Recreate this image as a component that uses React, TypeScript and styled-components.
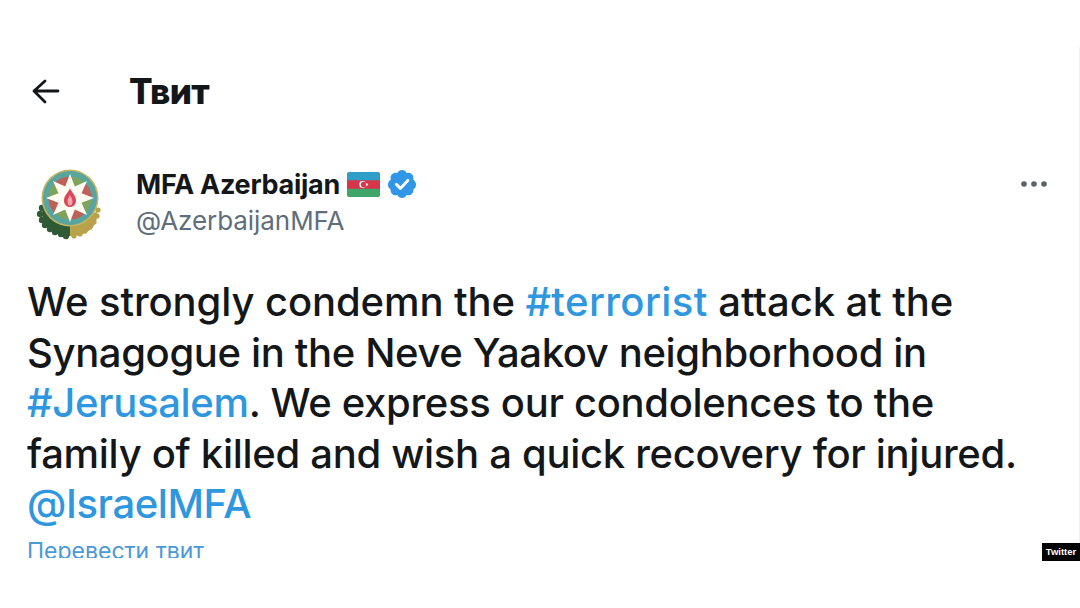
import React from "react";
import styled, { createGlobalStyle } from "styled-components";

const Global = createGlobalStyle`
  html, body { margin: 0; padding: 0; background: #fff; }
  body { font-family: Inter, "Liberation Sans", sans-serif; }
`;
const Page = styled.div`
  position: relative;
  width: 1080px;
  height: 608px;
  overflow: hidden;
  background: #fff;
  color: #14171a;
`;
const Tweet = styled.div`
  height: 558px;
  overflow: hidden;
  padding: 70px 0 0 27px;
  box-sizing: border-box;
  display: flex;
  flex-direction: column;
`;
const Header = styled.div`
  display: flex;
  align-items: center;
  height: 42px;
`;
const Back = styled.svg`
  width: 32px;
  height: 32px;
  margin-left: 5px;
`;
const Title = styled.h1`
  margin: 0 0 0 65px;
  font-size: 35px;
  font-weight: 800;
  letter-spacing: -0.7px;
  color: #14171a;
`;
const Author = styled.div`
  display: flex;
  align-items: flex-start;
  margin-top: 55px;
  height: 79px;
`;
const Avatar = styled.svg`
  width: 66px;
  height: 72px;
  margin: 1px 0 0 10px;
  flex: none;
`;
const Names = styled.div`
  margin-left: 33px;
  display: flex;
  flex-direction: column;
  gap: 4px;
`;
const NameRow = styled.div`
  display: flex;
  align-items: center;
  height: 34px;
`;
const Name = styled.span`
  font-size: 27px;
  font-weight: 700;
  letter-spacing: -0.27px;
`;
const Flag = styled.svg`
  width: 33px;
  height: 25px;
  margin-left: 7px;
`;
const Badge = styled.svg`
  width: 32px;
  height: 32px;
  margin-left: 6px;
`;
const Handle = styled.span`
  font-size: 26px;
  line-height: 32px;
  color: #5f6e7b;
  letter-spacing: -0.06px;
`;
const More = styled.svg`
  width: 28px;
  height: 8px;
  margin: 13px 32px 0 auto;
`;
const Body = styled.div`
  margin-top: 37px;
  font-size: 40px;
  font-weight: 450;
  line-height: 50.6px;
  color: #14171a;
`;
const Line = styled.div<{ $spacing: number }>`
  white-space: nowrap;
  letter-spacing: ${(p) => p.$spacing}px;
`;
const Tag = styled.span<{ $wide?: boolean }>`
  color: #2f96e0;
  letter-spacing: ${(p) => (p.$wide ? "0.4px" : "inherit")};
`;
const Translate = styled.div`
  margin-top: 6px;
  font-size: 23px;
  line-height: 30px;
  color: #4a98d8;
`;
const Credit = styled.div`
  position: absolute;
  right: 0;
  top: 543px;
  width: 38px;
  height: 18px;
  background: #000;
  color: #fff;
  font: 700 9.5px/18px "Liberation Sans", sans-serif;
  text-align: center;
`;
const EdgeLine = styled.div`
  position: absolute;
  right: 0;
  top: 47px;
  width: 1px;
  height: 510px;
  background: #f0f0f0;
`;

const star = (cx: number, cy: number, r1: number, r2: number, n: number) => {
  const pts: string[] = [];
  for (let i = 0; i < n * 2; i++) {
    const a = (Math.PI * i) / n - Math.PI / 2;
    const r = i % 2 ? r2 : r1;
    pts.push(`${(cx + r * Math.cos(a)).toFixed(1)},${(cy + r * Math.sin(a)).toFixed(1)}`);
  }
  return pts.join(" ");
};

const wedge = (cx: number, cy: number, r: number, i: number) => {
  const step = Math.PI / 4;
  const a0 = i * step - Math.PI / 2;
  const a1 = a0 + step;
  const x0 = (cx + r * Math.cos(a0)).toFixed(1);
  const y0 = (cy + r * Math.sin(a0)).toFixed(1);
  const x1 = (cx + r * Math.cos(a1)).toFixed(1);
  const y1 = (cy + r * Math.sin(a1)).toFixed(1);
  return `M${cx} ${cy}L${x0} ${y0}A${r} ${r} 0 0 1 ${x1} ${y1}Z`;
};

const wreathLeaves = [
  [5, 40], [3, 46], [5, 52], [8, 57], [13, 61], [18, 64], [24, 66], [29, 68],
];
const wheatLeaves = [
  [61, 42], [60, 48], [57, 54], [53, 59], [48, 63], [43, 66], [37, 68],
];

export default function App() {
  return (
    <Page>
      <Global />
      <Tweet>
        <Header>
          <Back viewBox="0 0 32 32" fill="none" stroke="#14171a" strokeWidth="2.8" strokeLinecap="round" strokeLinejoin="round">
            <path d="M2 16H26M13 6 2 16 13 27" />
          </Back>
          <Title>Твит</Title>
        </Header>
        <Author>
          <Avatar viewBox="0 0 66 72">
            <path d="M6 40c-2 10 1 18 9 23 5 3 11 5 18 5V50Z" fill="#2f5a35" />
            {wreathLeaves.map(([x, y]) => (
              <circle key={`${x}-${y}`} cx={x} cy={y} r="3.200" fill="#2f5a35" />
            ))}
            <path d="M60 44c1 9-3 16-10 20-5 3-11 4-17 4V50Z" fill="#b8a24a" />
            {wheatLeaves.map(([x, y]) => (
              <circle key={`${x}-${y}`} cx={x} cy={y} r="2.600" fill="#b8a24a" />
            ))}
            <circle cx="33" cy="30" r="28.500" fill="#c4b560" />
            <circle cx="33" cy="30" r="27" fill="#58a5a0" />
            {[0, 1, 2, 3, 4, 5, 6, 7].map((i) => (
              <path key={i} d={wedge(33, 30, 21.5, i)} fill={i % 2 ? "#c0605a" : "#7fa35c"} />
            ))}
            <polygon points={star(33, 30, 24, 12.5, 8)} fill="#fffdf4" />
            <path d="M33 20c1 4 6 7 6 12.500 0 4-2.500 6.500-6 6.500s-6-2.500-6-6.500c0-5.500 5-8.500 6-12.500Z" fill="#d9485a" />
            <path d="M33 27c1 2 2.500 4 2.500 6.500s-1 4-2.500 4-2.500-1.500-2.500-4 1.500-4.500 2.500-6.500Z" fill="#f3a6ae" />
          </Avatar>
          <Names>
            <NameRow>
              <Name>MFA Azerbaijan</Name>
              <Flag viewBox="0 0 34 24" preserveAspectRatio="none">
                <rect width="34" height="24" rx="3" fill="#d8344a" />
                <path d="M3 0h28a3 3 0 0 1 3 3v5H0V3a3 3 0 0 1 3-3Z" fill="#2f9fc9" />
                <path d="M0 16h34v5a3 3 0 0 1-3 3H3a3 3 0 0 1-3-3Z" fill="#3fa66a" />
                <circle cx="16" cy="12" r="3.300" fill="#fff" />
                <circle cx="17" cy="12" r="2.700" fill="#d8344a" />
                <polygon points={star(20.5, 12, 1.8, 0.8, 8)} fill="#fff" />
              </Flag>
              <Badge viewBox="0 0 24 24">
                <path
                  fill="#2f96e8"
                  d="M22.500 12.500c0-1.580-.875-2.950-2.148-3.600.154-.435.238-.905.238-1.400 0-2.210-1.710-3.998-3.818-3.998-.47 0-.92.084-1.336.25C14.818 2.415 13.510 1.500 12 1.500s-2.816.917-3.437 2.250c-.415-.165-.866-.25-1.336-.25-2.110 0-3.818 1.790-3.818 4 0 .494.083.964.237 1.400-1.272.65-2.147 2.018-2.147 3.600 0 1.495.782 2.798 1.942 3.486-.02.17-.032.34-.032.514 0 2.210 1.708 4 3.818 4 .47 0 .92-.086 1.335-.25.620 1.334 1.926 2.250 3.437 2.250 1.512 0 2.818-.916 3.437-2.250.415.163.865.248 1.336.248 2.110 0 3.818-1.790 3.818-4 0-.174-.012-.344-.033-.513 1.158-.687 1.943-1.990 1.943-3.484Z"
                />
                <path d="m7.800 12.300 3 3 5.500-6" fill="none" stroke="#fff" strokeWidth="2.200" strokeLinecap="round" strokeLinejoin="round" />
              </Badge>
            </NameRow>
            <Handle>@AzerbaijanMFA</Handle>
          </Names>
          <More viewBox="0 0 28 8" fill="#59626b">
            <circle cx="4" cy="4" r="2.800" />
            <circle cx="14" cy="4" r="2.800" />
            <circle cx="24" cy="4" r="2.800" />
          </More>
        </Author>
        <Body>
          <Line $spacing={-0.1}>
            We strongly condemn the <Tag $wide>#terrorist</Tag> attack at the
          </Line>
          <Line $spacing={-0.36}>Synagogue in the Neve Yaakov neighborhood in</Line>
          <Line $spacing={-0.32}>
            <Tag>#Jerusalem</Tag>. We express our condolences to the
          </Line>
          <Line $spacing={-0.3}>family of killed and wish a quick recovery for injured.</Line>
          <Line $spacing={-0.4}>
            <Tag>@IsraelMFA</Tag>
          </Line>
        </Body>
        <Translate>Перевести твит</Translate>
      </Tweet>
      <EdgeLine />
      <Credit>Twitter</Credit>
    </Page>
  );
}
